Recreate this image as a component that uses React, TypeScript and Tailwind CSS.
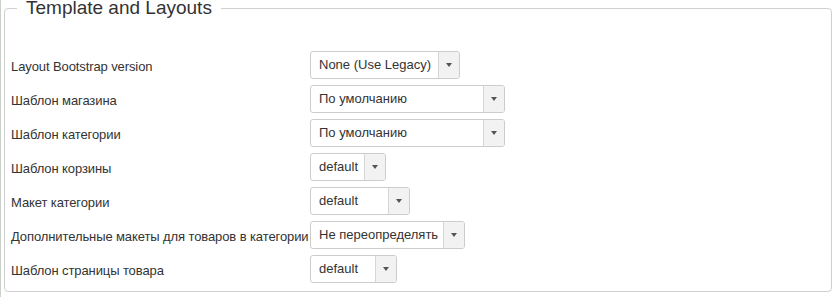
import React from "react";

type Row = {
  label: string;
  value: string;
  width: string;
};

const rows: Row[] = [
  { label: "Layout Bootstrap version", value: "None (Use Legacy)", width: "w-[150px]" },
  { label: "Шаблон магазина", value: "По умолчанию", width: "w-[195px]" },
  { label: "Шаблон категории", value: "По умолчанию", width: "w-[195px]" },
  { label: "Шаблон корзины", value: "default", width: "w-[76px]" },
  { label: "Макет категории", value: "default", width: "w-[100px]" },
  { label: "Дополнительные макеты для товаров в категории", value: "Не переопределять", width: "w-[155px]" },
  { label: "Шаблон страницы товара", value: "default", width: "w-[87px]" },
];

function FakeSelect({ value, width }: { value: string; width: string }) {
  return (
    <div
      className={`flex h-[28px] shrink-0 items-stretch overflow-hidden rounded-[3px] border border-[#cccccc] bg-white ${width}`}
    >
      <div className="flex flex-1 items-center truncate pl-[8px] text-[13px] text-[#333333]">
        {value}
      </div>
      <div className="flex w-[21px] shrink-0 items-center justify-center border-l border-[#d6d6d6] bg-[#f2f2f2]">
        <span className="h-0 w-0 border-x-[3.5px] border-t-[4px] border-x-transparent border-t-[#555555]" />
      </div>
    </div>
  );
}

export default function App() {
  return (
    <div
      className="h-[297px] w-[834px] overflow-hidden border-l border-[#c9d1c9] bg-white pl-[3px] pr-[2px]"
      style={{ fontFamily: '"Liberation Sans", Arial, sans-serif' }}
    >
      <fieldset className="rounded-[4px] border border-[#cfcfcf] pb-[8px] pl-[5px] pt-[35px]">
        <legend className="ml-[7px] px-[9px] text-[19px] leading-[16px] text-[#333333]">
          Template and Layouts
        </legend>
        <div className="flex flex-col gap-[6px]">
          {rows.map((r) => (
            <div key={r.label} className="flex items-center">
              <label className="w-[300px] shrink-0 whitespace-nowrap pl-[1px] pt-[3px] text-[13px] leading-[18px] tracking-[-0.1px] text-[#333333]">
                {r.label}
              </label>
              <FakeSelect value={r.value} width={r.width} />
            </div>
          ))}
        </div>
      </fieldset>
    </div>
  );
}
